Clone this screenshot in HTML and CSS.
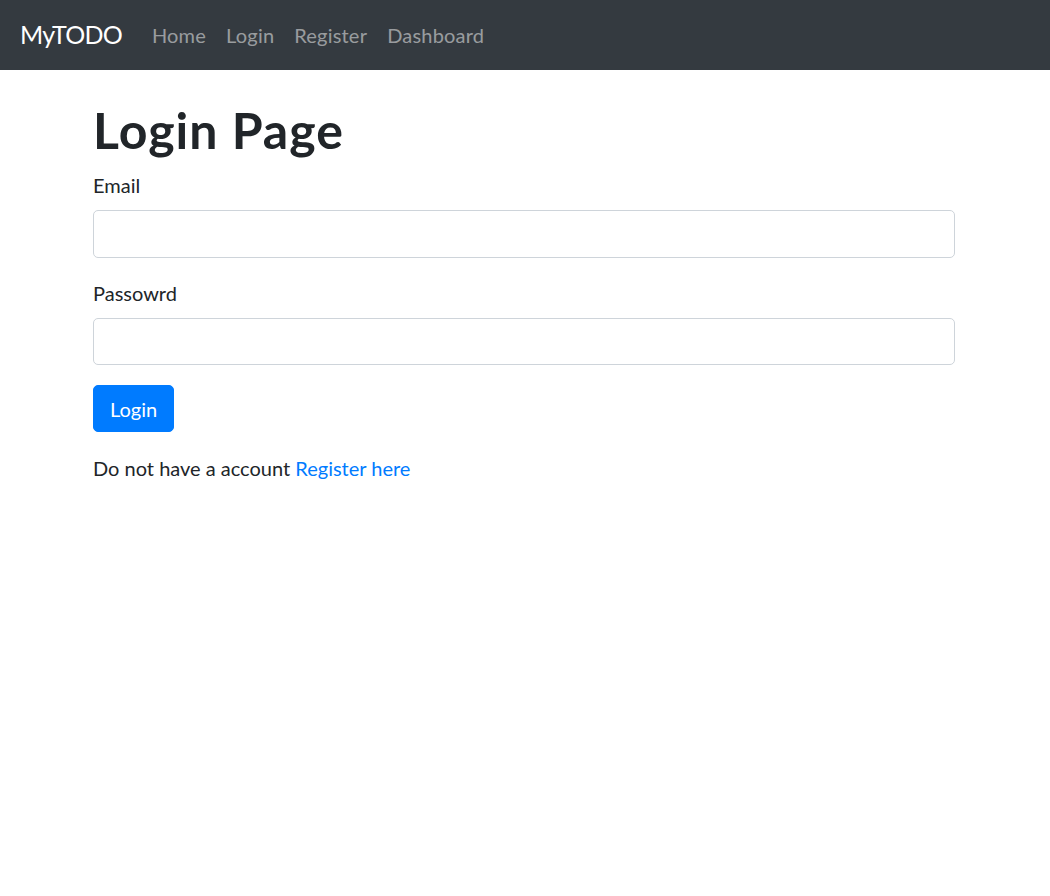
FILE: index.html
```html
<!DOCTYPE html>
<html lang="en">
<head>
<meta charset="utf-8">
<title>MyTODO - Login</title>
<link rel="stylesheet" href="styles.css">
</head>
<body>
<nav class="navbar">
  <a class="brand" href="#">MyTODO</a>
  <ul class="nav">
    <li><a class="nav-link" href="#">Home</a></li>
    <li><a class="nav-link" href="#">Login</a></li>
    <li><a class="nav-link" href="#">Register</a></li>
    <li><a class="nav-link" href="#">Dashboard</a></li>
  </ul>
</nav>
<main class="container">
  <h1 class="title">Login Page</h1>
  <form class="form">
    <div class="form-group">
      <label class="label" for="email">Email</label>
      <input class="input" id="email" type="email">
    </div>
    <div class="form-group">
      <label class="label" for="password">Passowrd</label>
      <input class="input" id="password" type="password">
    </div>
    <button class="btn" type="button">Login</button>
  </form>
  <p class="note">Do not have a account <a class="link" href="#">Register here</a></p>
</main>
</body>
</html>
```
FILE: styles.css
```css
* { box-sizing: border-box; }
body {
  margin: 0;
  font-family: Lato, "Open Sans", sans-serif;
  font-size: 20px;
  line-height: 1.5;
  color: #212529;
  background: #fff;
}
.navbar {
  display: flex;
  align-items: center;
  height: 70px;
  padding: 10px 20px;
  background: #343a40;
}
.brand {
  font-size: 25px;
  line-height: 37.5px;
  letter-spacing: -0.8px;
  color: #fff;
  text-decoration: none;
  margin-right: 20px;
}
.nav {
  display: flex;
  list-style: none;
  margin: 0;
  padding: 0;
}
.nav-link {
  display: block;
  padding: 10px 10px;
  letter-spacing: 0.2px;
  color: rgba(255,255,255,.5);
  text-decoration: none;
}
.container {
  width: 900px;
  margin: 30px auto 0;
  padding: 0 20px 0 18px;
}
.title {
  margin: 0 0 10px;
  font-size: 50px;
  font-weight: 700;
  letter-spacing: 1px;
  line-height: 1.2;
}
.form-group { margin-bottom: 20px; }
.label {
  display: inline-block;
  margin-bottom: 10px;
}
.input {
  display: block;
  width: 100%;
  height: 47.5px;
  padding: 7.5px 15px;
  font: inherit;
  border: 1px solid #ced4da;
  border-radius: 5px;
  background: #fff;
}
.btn {
  display: inline-block;
  padding: 7.5px 16px;
  font: inherit;
  line-height: 30px;
  color: #fff;
  background: #007bff;
  border: 1px solid #007bff;
  border-radius: 5px;
}
.note { margin: 21px 0 0; }
.link { color: #007bff; text-decoration: none; }
```
